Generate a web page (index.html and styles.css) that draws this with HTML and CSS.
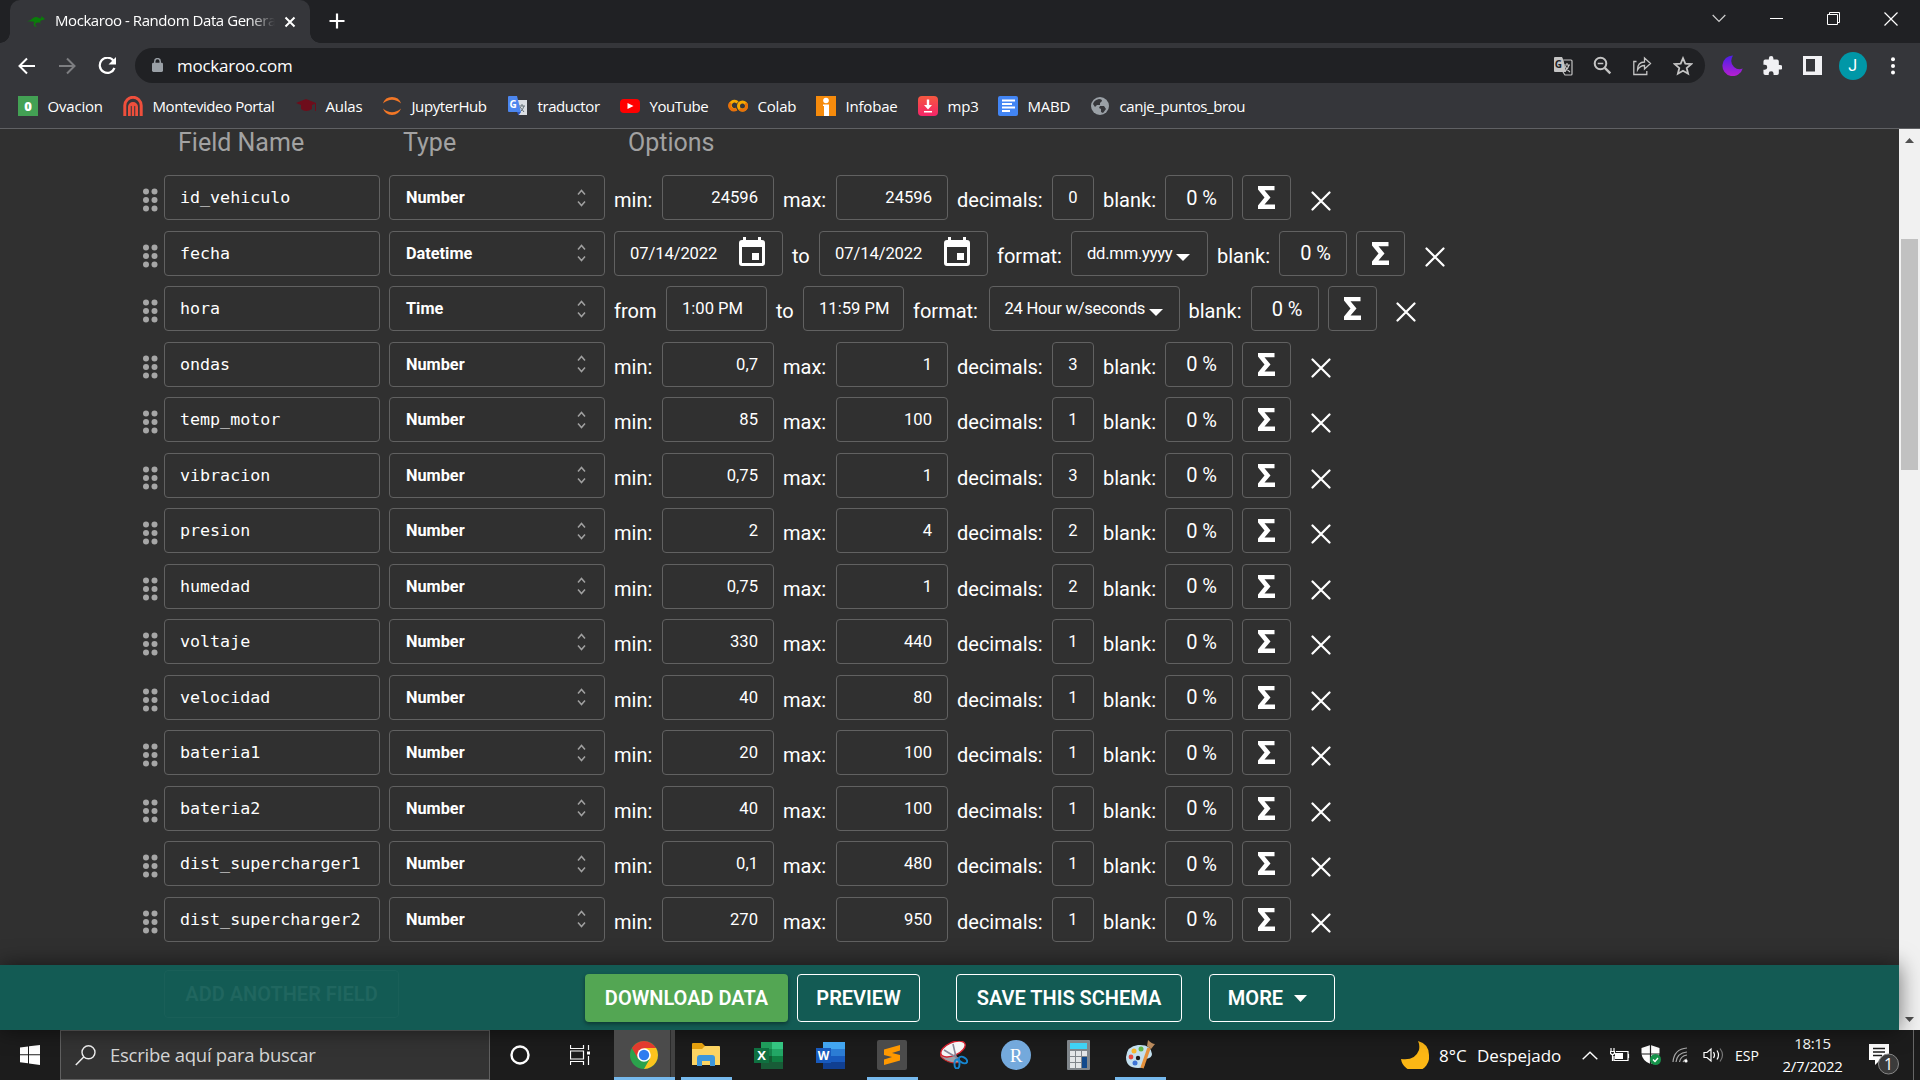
FILE: index.html
```html
<!DOCTYPE html>
<html lang="es">
<head>
<meta charset="utf-8">
<title>Mockaroo - Random Data Generator</title>
<link rel="stylesheet" href="styles.css">
</head>
<body>
<div class="tabstrip">
  <div class="tab">
    <svg class="roo" width="18" height="12" viewBox="0 0 18 12"><path fill="#0a7d0a" d="M0 6.500Q4 5.500 6 3q3-2 6 0l2 .5L14.500 1l1.500 1.500 2 1.500-2 1-2 .5-1 1.500 1 2-1.500-1.500L11 7.500 9 8l-1 2 2 1.500H7.500L6.500 9l1-2Q4 6 0 6.500Z"/></svg>
    <span class="tab-title">Mockaroo - Random Data Genera</span>
    <svg width="12" height="12" viewBox="0 0 12 12"><path d="m1.500 1.500 9 9m0-9-9 9" stroke="#fff" stroke-width="2"/></svg>
  </div>
  <svg class="plus" width="16" height="16" viewBox="0 0 16 16"><path d="M8 .5v15M.5 8h15" stroke="#fff" stroke-width="2.200"/></svg>
  <div class="winbtns">
    <span><svg width="14" height="9" viewBox="0 0 14 9"><path d="m.7 1 6.300 6.500L13.300 1" fill="none" stroke="#d0d0d0" stroke-width="1.200"/></svg></span>
    <span><svg width="13" height="13"><path d="M0 6.500h13" stroke="#fff"/></svg></span>
    <span><svg width="13" height="13"><path d="M.5 2.500h10v10H.5zM2.500 2.500v-2h10v10h-2" fill="none" stroke="#fff"/></svg></span>
    <span><svg width="14" height="14"><path d="m.5.500 13 13m0-13-13 13" stroke="#fff" stroke-width="1.200"/></svg></span>
  </div>
</div>

<div class="toolbar">
  <div class="nav">
    <svg width="18" height="18" viewBox="0 0 18 18"><path d="M17 9H2m7-7.500L1.500 9 9 16.500" fill="none" stroke="#fff" stroke-width="2"/></svg>
    <svg width="18" height="18" viewBox="0 0 18 18"><path d="M1 9h15M9 1.500 16.500 9 9 16.500" fill="none" stroke="#7d7e81" stroke-width="2"/></svg>
    <svg width="19" height="18" viewBox="0 0 19 18"><path d="M15.300 3.500A7.600 7.600 0 1 0 16.500 11" fill="none" stroke="#fff" stroke-width="2.200"/><path d="M18 0v7.500h-7.500z" fill="#fff"/></svg>
  </div>
  <div class="omnibox">
    <svg width="11" height="15" viewBox="0 0 12 16"><rect y="5" width="12" height="10" rx="1.500" fill="#9aa0a6"/><path d="M3 6V3.500a3 3 0 0 1 6 0V6" fill="none" stroke="#9aa0a6" stroke-width="1.600"/></svg>
    <span class="url">mockaroo.com</span>
    <div class="omni-icons">
      <svg width="20" height="20" viewBox="0 0 20 20"><path fill="#c4c4c4" d="M2 1h7l1.500 3L13 16H2a1 1 0 0 1-1-1V2a1 1 0 0 1 1-1z"/><text x="1.700" y="12" font-size="10" font-weight="700" class="ui" fill="#202124">G</text><path d="M10.500 4H18q1 0 1 1v13q0 1-1 1h-6l-2-3M11 9h6m-3-2v2m2 0q-1 4-4 6m0-5q2 4 5 6" fill="none" stroke="#c4c4c4" stroke-width="1.200"/></svg>
      <svg width="19" height="19" viewBox="0 0 19 19"><circle cx="7.500" cy="7.500" r="5.800" fill="none" stroke="#c4c4c4" stroke-width="2"/><path d="M4.700 7.500h5.600" stroke="#c4c4c4" stroke-width="1.500"/><path d="m11.800 11.800 5.500 5.500" stroke="#c4c4c4" stroke-width="2.400"/></svg>
      <svg width="20" height="20" viewBox="0 0 20 20"><path d="M4.500 5.500H1.800v13h13v-3.500M5.500 14c0-6 3-8 7-8V2l6 5.500-6 5.500v-3.500c-3 0-5 1-7 4.500z" fill="none" stroke="#c4c4c4" stroke-width="1.300"/></svg>
      <svg width="20" height="20" viewBox="0 0 20 20"><path d="m10 2.200 2.300 5.400 5.900.5-4.500 3.900 1.400 5.700-5.100-3-5.100 3L6.300 12 1.800 8.100l5.900-.5z" fill="none" stroke="#c4c4c4" stroke-width="1.800"/></svg>
    </div>
  </div>
  <div class="exts">
    <span><svg width="21" height="21" viewBox="0 0 21 21"><defs><linearGradient id="mg" x2="0" y2="1"><stop stop-color="#4a1fe8"/><stop offset="1" stop-color="#b71fd0"/></linearGradient></defs><path fill="url(#mg)" d="M11 .5a10.300 10.300 0 1 0 9.700 13Q16 15.500 12 12 7 7 11 .5z"/></svg></span>
    <span><svg width="19" height="19" viewBox="1.500 1 21 21"><path fill="#f1f1f4" d="M20.500 11H19V7a2 2 0 0 0-2-2h-4V3.500a2.500 2.500 0 0 0-5 0V5H4a2 2 0 0 0-2 2v3.800h1.500a2.700 2.700 0 0 1 0 5.400H2V20a2 2 0 0 0 2 2h3.800v-1.500a2.700 2.700 0 0 1 5.400 0V22H17a2 2 0 0 0 2-2v-4h1.500a2.500 2.500 0 0 0 0-5z"/></svg></span>
    <span><svg width="19" height="19" viewBox="0 0 19 19"><path fill="#f1f1f4" fill-rule="evenodd" d="M0 0h19v19H0zM3 3v12.500h9V3z"/></svg></span>
    <span><b class="avatar">J</b></span>
    <span><svg width="4" height="18" viewBox="0 0 4 18"><g fill="#fff"><circle cx="2" cy="2.200" r="2"/><circle cx="2" cy="9" r="2"/><circle cx="2" cy="15.500" r="2"/></g></svg></span>
  </div>
</div>

<div class="bookmarks">
  <div><svg viewBox="0 0 20 20"><path fill="#43a154" d="M0 0h20v20H0z"/><text x="10" y="14.500" text-anchor="middle" font-size="13" font-weight="800" class="ui" fill="#fff">0</text></svg>Ovacion</div>
  <div class="tight"><svg viewBox="0 0 20 20"><path d="M1.800 20V9.500a8.200 8.200 0 0 1 16.400 0V20M6.500 20v-9a3.500 3.500 0 0 1 7 0v9M10 8v12" fill="none" stroke="#ef4f3c" stroke-width="3"/><path d="M8.200 10v10M11.800 10v10" stroke="#35363a" stroke-width=".8"/></svg>Montevideo Portal</div>
  <div><svg viewBox="0 0 20 20"><path fill="#6e0d1b" d="m0 7 10-4 10 4v8h-1V8l-3 1v4q-6 4-11 0V9z"/></svg>Aulas</div>
  <div class="tight"><svg viewBox="0 0 20 20"><path fill="#f37726" d="M1 7.500a9.500 9.500 0 0 1 18 0q-9-7.500-18 0zM1 12.500a9.500 9.500 0 0 0 18 0q-9 7.500-18 0z"/></svg>JupyterHub</div>
  <div class="tight"><svg viewBox="0 0 20 20"><path fill="#dcdfe3" d="M7 4h12v15h-8z"/><path d="M11 10h6m-3-2v2m2 0q-1 4-4 6m0-5 4 5" fill="none" stroke="#657177"/><path fill="#4c86ee" d="M1 0h8l4 16H1q-1 0-1-1V1q0-1 1-1z"/><path fill="#3059c4" d="m9 16h4l-2.500 3.500z"/><text x="1.500" y="12" font-size="10" font-weight="700" class="ui" fill="#fff">G</text></svg>traductor</div>
  <div class="tight"><svg viewBox="0 0 20 20"><rect y="3" width="20" height="14" rx="4" fill="#f00"/><path fill="#fff" d="m7.500 7 6 3-6 3z"/></svg>YouTube</div>
  <div><svg viewBox="0 0 20 20"><g fill="none" stroke-width="3"><circle cx="14.500" cy="10" r="4" stroke="#f9ab00"/><path d="M9.500 6.500A4.200 4.200 0 1 0 8.500 13" stroke="#f9ab00"/><path d="M2.700 7A4.200 4.200 0 0 0 8.500 13M11.700 13A4 4 0 0 0 17.400 7.200" stroke="#e8710a"/></g></svg>Colab</div>
  <div><svg viewBox="0 0 20 20"><path fill="#f68b0c" d="M0 0h20v20H0z"/><circle cx="10" cy="4.500" r="2.800" fill="#fff"/><path fill="#fff" d="M7 8.500h6V20H8V10H7z"/></svg>Infobae</div>
  <div><svg viewBox="0 0 20 20"><defs><linearGradient id="rg" x2="0" y2="1"><stop stop-color="#f4583f"/><stop offset="1" stop-color="#f52469"/></linearGradient></defs><rect width="20" height="20" rx="4" fill="url(#rg)"/><path fill="#fff" d="M8.800 3.500h2.400V9H14l-4 4.500L6 9h2.800zM6 15h8v1.500H6z"/></svg>mp3</div>
  <div><svg viewBox="0 0 20 20"><rect width="20" height="20" rx="2" fill="#4285f4"/><path d="M4 4.500h13M4 8h10M4 11.500h13M4 15h8" stroke="#fff" stroke-width="1.900"/></svg>MABD</div>
  <div class="tight"><svg viewBox="0 0 20 20"><circle cx="10" cy="10" r="9" fill="#9aa0a6"/><path fill="#35363a" d="M9 3q3 0 3 2l-2 2 0 2H7L5 11 3 8q1-4 6-5zM10 10l4 0 2 3-3 4-2-1 0-3-2-1z"/></svg>canje_puntos_brou</div>
</div>

<div class="viewport">
  <main class="page">
    <div class="heads"><span>Field Name</span><span>Type</span><span>Options</span></div>
    <div id="rows"></div>
  </main>
  <div class="scrollbar">
    <svg width="9" height="5"><path fill="#505050" d="M4.500 0 9 5H0z"/></svg>
    <div class="thumb"></div>
    <svg width="9" height="5"><path fill="#505050" d="M0 0h9L4.500 5z"/></svg>
  </div>
  <div class="actions">
    <span class="ghost">ADD ANOTHER FIELD</span>
    <span class="btn primary">DOWNLOAD DATA</span>
    <span class="btn preview">PREVIEW</span>
    <span class="btn save">SAVE THIS SCHEMA</span>
    <span class="btn more">MORE<svg width="13" height="7"><path fill="#fff" d="M0 0h13L6.500 7z"/></svg></span>
  </div>
</div>

<div class="taskbar">
  <span class="start"><svg width="20" height="20" viewBox="0 0 20 20"><path fill="#fff" d="M0 2.500 8 1.400v7.900H0zM9 1.300 20 0v9.300H9zM0 10.300h8v7.900l-8-1zM9 10.300h11V20L9 18.500z"/></svg></span>
  <div class="search"><svg width="21" height="21" viewBox="0 0 21 21"><circle cx="13.500" cy="7.300" r="6.500" fill="none" stroke="#eee" stroke-width="1.400"/><path d="M8.700 12 .8 20" stroke="#eee" stroke-width="1.500"/></svg><span>Escribe aquí para buscar</span></div>
  <span class="small"><svg width="20" height="20"><circle cx="10" cy="10" r="8.500" fill="none" stroke="#fff" stroke-width="2.400"/></svg></span>
  <span class="small view"><svg width="21" height="20" viewBox="0 0 21 20"><path d="M.5 0v3.500h13V0M.5 20v-3.500h13V20M.5 6h13v8H.5zM18.500 0v5M18.500 11v9" fill="none" stroke="#fff" stroke-width="1.200"/><path fill="#fff" d="M17 6.500h3v3h-3z"/></svg></span>
  <span class="app active"><svg width="28" height="28" viewBox="0 0 28 28"><circle cx="14" cy="14" r="14" fill="#2ba24c"/><path fill="#e33b2e" d="M1.900 7A14 14 0 0 1 26.100 7L14 8 8 17.500z"/><path fill="#fcc31e" d="M26.100 7A14 14 0 0 1 14 28l6-10.500L14 7z"/><circle cx="14" cy="14" r="6.800" fill="#fff"/><circle cx="14" cy="14" r="5.200" fill="#2f7cf0"/></svg></span>
  <span class="app open"><svg width="28" height="25" viewBox="0 0 28 25"><path fill="#e39f0d" d="M0 1q0-1 1-1h9l3 3v5H0z"/><path fill="#fcd462" d="M0 6h10l3-3h14q1 0 1 1v18H0z"/><path fill="#3d97dc" d="M5 23v-8q0-3 3-3h12q3 0 3 3v8h-5v-5h-8v5z"/></svg></span>
  <span class="app"><svg width="29" height="27" viewBox="0 0 29 27"><path fill="#1f9c5b" d="M7 0h11v7H7z"/><path fill="#34c481" d="M18 0h11v7H18z"/><path fill="#15834b" d="M7 7h11v7H7z"/><path fill="#22a665" d="M18 7h11v7H18z"/><path fill="#135b32" d="M7 14h11v13H7z"/><path fill="#0f7e42" d="M18 14h11v6H18z"/><path fill="#185c37" d="M7 20h22v7H7z"/><path fill="#0f7040" d="M0 6h15v15H0z"/><text x="7.500" y="18" text-anchor="middle" font-size="13" font-weight="700" class="ui" fill="#fff">X</text></svg></span>
  <span class="app"><svg width="29" height="27" viewBox="0 0 29 27"><path fill="#42a5f0" d="M7 0h22v7H7z"/><path fill="#2b7cd4" d="M7 7h22v7H7z"/><path fill="#185abd" d="M7 14h22v6H7z"/><path fill="#103f91" d="M7 20h22v7H7z"/><path fill="#185abd" d="M0 6h15v15H0z"/><text x="7.500" y="18" text-anchor="middle" font-size="12" font-weight="700" class="ui" fill="#fff">W</text></svg></span>
  <span class="app open"><svg width="30" height="30" viewBox="0 0 30 30"><rect width="30" height="30" rx="2" fill="#4b4b4b"/><path fill="#ff9800" d="m7 9.500 16-4.500v5.500L15 13l8 2v5.500L7 25v-5.500l8-2.500-8-2z"/></svg></span>
  <span class="app"><svg width="28" height="28" viewBox="0 0 28 28"><ellipse cx="10" cy="17" rx="10" ry="4" fill="#9fa2a8" stroke="#c22" transform="rotate(20 10 17)"/><ellipse cx="13" cy="8" rx="13" ry="6.500" fill="#f5f5f5" stroke="#d3202e" stroke-width="1.400" transform="rotate(-24 13 8)"/><path d="m13 3 3 13M4 9l15 9" stroke="#889" stroke-width="1.600"/><ellipse cx="17" cy="23" rx="2.500" ry="4.500" fill="none" stroke="#1685cf" stroke-width="2"/><ellipse cx="23" cy="19" rx="4.500" ry="2.800" fill="none" stroke="#1685cf" stroke-width="2" transform="rotate(30 23 19)"/></svg></span>
  <span class="app"><svg width="30" height="30" viewBox="0 0 30 30"><circle cx="15" cy="15" r="15" fill="#74a9dc"/><text x="15" y="21.500" text-anchor="middle" font-size="19" class="serif" fill="#fff">R</text></svg></span>
  <span class="app"><svg width="23" height="30" viewBox="0 0 23 30"><rect width="23" height="30" rx="1" fill="#80868b"/><path fill="#3fd2f5" d="M3 3h17v6H3z"/><path fill="#e3e6e8" d="M3 11h5v5H3zM9 11h5v5H9zM15 11h5v5h-5zM3 17h5v5H3zM9 17h5v5H9zM3 23h5v5H3zM9 23h5v5H9z"/><path fill="#124a8c" d="M15 17h5v11h-5z"/></svg></span>
  <span class="app open"><svg width="30" height="30" viewBox="0 0 30 30"><path fill="#c3e0ef" d="M13 5q13-1 14 9 0 4-6 5-3 1-1 4 0 5-7 5Q1 28 1 17 2 6 13 5z"/><circle cx="9" cy="11" r="2.500" fill="#f8b62b"/><circle cx="16" cy="9" r="2.500" fill="#62b544"/><circle cx="6" cy="17" r="2.400" fill="#e84a3f"/><circle cx="10" cy="23" r="2.500" fill="#3d74d6"/><circle cx="13" cy="18" r="2.200" fill="#1c1c1c"/><path d="m24 8-7 20" stroke="#e4913c" stroke-width="3.400"/><path fill="#b98a5c" d="M22 6 23 0q4 4 7 4l-4 5z"/></svg></span>
  <div class="tray">
    <span class="t-moon"><svg width="28" height="28" viewBox="0 0 28 28"><path fill="#fcb715" d="M17 0q11 3 11 14a14 14 0 0 1-28 4q14 2 18-9 1-5-1-9z"/></svg></span>
    <span class="t-temp">8°C</span><span class="t-desp">Despejado</span>
    <span class="t-chev"><svg width="16" height="9"><path d="m.7 8.300 7.300-7 7.300 7" fill="none" stroke="#fff" stroke-width="1.400"/></svg></span>
    <span class="t-ic"><svg width="20" height="15" viewBox="0 0 20 15"><path d="M6 3.500h12v9H4V8M18.500 6v4M1 0v3M4 0v3M.5 3.500h4v2q-2 2-4 0zM2.500 6v7" fill="none" stroke="#fff" stroke-width="1.200"/><path fill="#fff" d="M5 5h8v6H5z"/></svg></span>
    <span class="t-ic"><svg width="20" height="20" viewBox="0 0 20 20"><path fill="#fff" d="m9.500 0 9 3v6q-1 7-9 10-8-3-9-10V3z"/><path d="M9.500 0v19M0 9h19" stroke="#1c1c1c" stroke-width="1.200"/><circle cx="14.500" cy="14.500" r="5.500" fill="#16924a"/><path d="m12 14.500 2 2 3-3.500" fill="none" stroke="#fff" stroke-width="1.300"/></svg></span>
    <span class="t-ic"><svg width="16" height="16" viewBox="0 0 16 16"><g fill="none" stroke="#aaa" stroke-width="1.200"><path d="M1 15Q2 2 15 1M4 15q1-9 11-10M7.500 15q1-6 7.500-7"/><path d="M11 15q1-2 4-3"/></g><circle cx="14" cy="14" r="1.600" fill="#fff"/></svg></span>
    <span class="t-vol"><svg width="21" height="16" viewBox="0 0 21 16"><path d="M1 5.500h3L8 2v12l-4-3.500H1zM10.500 5q2 3 0 6M14 3.500q3 4.500 0 9" fill="none" stroke="#fff" stroke-width="1.200"/><path d="M17 1.500q5 6.500 0 13" fill="none" stroke="#777" stroke-width="1.200"/></svg></span>
    <span class="t-esp">ESP</span>
    <span class="t-clock"><span>18:15</span><span>2/7/2022</span></span>
    <span class="t-note"><svg width="32" height="32" viewBox="0 0 32 32"><path fill="#fff" d="M1 1h20v16h-9l-5 5v-5H1z"/><path d="M5 5.500h12M5 9h12M5 12.500h9" stroke="#1c1c1c" stroke-width="1.300"/><circle cx="20.500" cy="21" r="10" fill="#3b3b3b" stroke="#888"/><text x="20.500" y="26.500" text-anchor="middle" font-size="16" class="ui" fill="#fff">1</text></svg></span>
  </div>
</div>
<script src="rows.js"></script>
</body>
</html>
```
FILE: rows.js
```js
const handle = '<svg class="handle" width="16" height="24"><g fill="#a6a6a6"><circle cx="3" cy="3.500" r="3"/><circle cx="11.500" cy="3.500" r="3"/><circle cx="3" cy="12" r="3"/><circle cx="11.500" cy="12" r="3"/><circle cx="3" cy="20.500" r="3"/><circle cx="11.500" cy="20.500" r="3"/></g></svg>';
const updown = '<svg width="9" height="18"><path d="m1 5.500 3.500-4 3.500 4M1 12.500l3.500 4 3.500-4" fill="none" stroke="#a0a0a0" stroke-width="1.500"/></svg>';
const calendar = '<svg class="cal" width="26" height="29" viewBox="0 0 26 29"><path fill="#fff" fill-rule="evenodd" d="M4 0h3v3h12V0h3v3h1q3 0 3 3v20q0 3-3 3H3q-3 0-3-3V6q0-3 3-3h1zM3 10v16h20V10z"/><path fill="#fff" d="M13 16h7v7h-7z"/></svg>';
const caret = '<svg class="caret" width="14" height="7"><path fill="#fff" d="M0 0h14L7 7z"/></svg>';
const sigma = '<span class="box sigma"><svg width="17" height="23" viewBox="0 0 17 23"><path fill="#fff" d="M0 0h16.500v4.200H6.500l6 7.200-6 7.200h10.500V23H0v-3.500l6.500-8L0 3.500z"/></svg></span>';
const close = '<svg class="close" width="20" height="20"><path d="m1.500 1.500 17 17m0-17-17 17" stroke="#fff" stroke-width="2.200" stroke-linecap="round"/></svg>';

const label = (text, cls) => `<span class="label ${cls}">${text}</span>`;
const box = (text, cls) => `<span class="box ${cls}">${text}</span>`;
const blank = label('blank:', 'l-blank') + box('0 %', 'pct') + sigma + close;

function numberOptions(min, max, decimals) {
  return label('min:', 'l-min') + box(min, 'num') + label('max:', 'l-max') + box(max, 'num') +
    label('decimals:', 'l-dec') + box(decimals, 'dec') + blank;
}
const dates = box('<span>07/14/2022</span>' + calendar, 'date') + label('to', 'l-to') +
  box('<span>07/14/2022</span>' + calendar, 'date') + label('format:', 'l-fmt') + box('<span>dd.mm.yyyy</span>' + caret, 'datefmt') + blank;
const times = label('from', 'l-from') + box('1:00 PM', 'time') + label('to', 'l-to') +
  box('11:59 PM', 'time') + label('format:', 'l-fmt wide') + box('<span>24 Hour w/seconds</span>' + caret, 'timefmt') + blank;

const fields = [
  ['id_vehiculo', 'Number', numberOptions('24596', '24596', 0)],
  ['fecha', 'Datetime', dates],
  ['hora', 'Time', times],
  ['ondas', 'Number', numberOptions('0,7', '1', 3)],
  ['temp_motor', 'Number', numberOptions('85', '100', 1)],
  ['vibracion', 'Number', numberOptions('0,75', '1', 3)],
  ['presion', 'Number', numberOptions('2', '4', 2)],
  ['humedad', 'Number', numberOptions('0,75', '1', 2)],
  ['voltaje', 'Number', numberOptions('330', '440', 1)],
  ['velocidad', 'Number', numberOptions('40', '80', 1)],
  ['bateria1', 'Number', numberOptions('20', '100', 1)],
  ['bateria2', 'Number', numberOptions('40', '100', 1)],
  ['dist_supercharger1', 'Number', numberOptions('0,1', '480', 1)],
  ['dist_supercharger2', 'Number', numberOptions('270', '950', 1)],
];
document.getElementById('rows').innerHTML = fields.map(([name, type, options]) =>
  `<div class="row">${handle}${box(name, 'name')}${box(type + updown, 'type')}${options}</div>`).join('');
```
FILE: styles.css
```css
* { box-sizing: border-box; }
body { margin: 0; width: 1920px; height: 1080px; overflow: hidden; display: flex; flex-direction: column; background: #303030; color: #fff; font-family: "Open Sans", "Noto Sans", sans-serif; }
svg { display: block; flex: none; }
.ui { font-family: "Open Sans", sans-serif; }
.serif { font-family: "Liberation Serif", serif; }

.tabstrip { flex: none; height: 43px; background: #202124; display: flex; padding-left: 10px; }
.tab { position: relative; width: 300px; height: 43px; background: #35363a; border-radius: 10px 10px 0 0; display: flex; align-items: center; padding-left: 17px; }
.tab::before, .tab::after { content: ""; position: absolute; bottom: 0; width: 10px; height: 10px; }
.tab::before { left: -10px; background: radial-gradient(circle at 0 0, transparent 9.500px, #35363a 10px); }
.tab::after { right: -10px; background: radial-gradient(circle at 100% 0, transparent 9.500px, #35363a 10px); }
.tab-title { width: 220px; margin: 0 9px 0 10px; padding-bottom: 3px; white-space: nowrap; font-size: 15px; letter-spacing: -.44px; mask-image: linear-gradient(90deg, #000 88%, transparent); }
.roo { margin-top: -2px; }
.plus { margin: 13px 0 0 19px; }
.winbtns { margin-left: auto; display: flex; height: 37px; }
.winbtns span { width: 57.500px; display: flex; align-items: center; justify-content: center; }

.toolbar { flex: none; height: 45px; background: #35363a; display: flex; align-items: center; }
.nav { width: 135px; display: flex; gap: 22px; padding-left: 18px; }
.omnibox { width: 1570px; height: 35px; background: #202124; border-radius: 18px; display: flex; align-items: center; padding: 0 17px 0 17px; }
.url { margin-left: 14px; font-size: 17px; letter-spacing: -.25px; }
.omni-icons { margin-left: auto; display: flex; align-items: center; gap: 20.300px; margin-right: -4.500px; }
.exts { display: flex; height: 45px; margin-left: 7px; }
.exts span { width: 40.200px; display: flex; align-items: center; justify-content: center; }
.avatar { width: 28px; height: 28px; border-radius: 50%; background: #0097a7; font-family: Roboto, sans-serif; font-weight: 400; font-size: 16px; line-height: 28px; text-align: center; }

.bookmarks { flex: none; height: 41px; background: #35363a; border-bottom: 1px solid #606164; display: grid; grid-template-columns: 105px 173px 86px 126px 112px 108px 88px 102px 80px 92px 200px; padding: 0 0 5px 18px; font-size: 15px; letter-spacing: -.2px; }
.bookmarks div { display: flex; align-items: center; gap: 9.500px; white-space: nowrap; }
.bookmarks .tight { letter-spacing: -.42px; }
.bookmarks svg { width: 20px; height: 20px; }

.viewport { position: relative; flex: none; height: 901px; display: flex; font-family: Roboto, sans-serif; }
.page { width: 1899px; padding-left: 143px; overflow: hidden; }
.heads { height: 46px; display: grid; grid-template-columns: 225px 225px 200px; padding-left: 35px; font-size: 25px; line-height: 27px; color: #a2a2a2; }
.row { height: 55.540px; display: flex; gap: 9px; align-items: flex-start; white-space: nowrap; }
.handle { margin: 13px -4px 0 0; }
.box { height: 45px; border: 1px solid #616161; border-radius: 4px; display: flex; align-items: center; font-size: 16.600px; flex: none; }
.name { width: 216px; padding-left: 15px; font-family: "DejaVu Sans Mono", monospace; font-size: 16.660px; }
.type { width: 216px; padding: 0 18px 0 16px; justify-content: space-between; font-weight: 700; font-size: 16.300px; }
.num { width: 112px; justify-content: flex-end; padding-right: 15px; }
.dec { width: 42px; justify-content: center; }
.pct { width: 68px; justify-content: flex-end; padding-right: 15px; font-size: 20px; }
.sigma { width: 49px; justify-content: center; }
.date { width: 169px; justify-content: space-between; padding: 0 16px 0 15px; }
.date span { width: 84px; letter-spacing: -.1px; }
.cal { margin: -3px 1px 0 0; }
.datefmt { width: 137px; padding-left: 15px; letter-spacing: -.25px; }
.time { width: 101px; padding-left: 15px; }
.timefmt { width: 191px; padding-left: 15px; letter-spacing: -.25px; }
.caret { margin: 8px 0 0 4px; }
.label { font-size: 20px; line-height: 24px; margin-top: 13px; flex: none; }
.l-min { width: 39px; }
.l-max { width: 44px; }
.l-dec { width: 86px; }
.l-blank { width: 53px; }
.l-to { width: 18px; }
.l-fmt { width: 65px; }
.l-fmt.wide { width: 66.500px; }
.l-from { width: 43px; }
.close { margin: 16px 0 0 10.500px; }

.scrollbar { width: 21px; background: #f1f1f1; display: flex; flex-direction: column; align-items: center; padding: 9px 0 8px; }
.thumb { width: 17px; height: 231px; background: #c1c1c1; margin: 96px 0 auto; }

.actions { position: absolute; left: 0; bottom: 0; width: 1899px; height: 65px; background: #135b54; box-shadow: 0 0 22px rgba(0,0,0,.55); display: flex; padding-top: 9px; font-size: 20px; font-weight: 600; }
.ghost { width: 235px; height: 48px; margin: -4px 186px 0 164px; border: 1px solid #195f58; border-radius: 4px; color: #20665f; line-height: 47px; text-align: center; }
.btn { height: 48px; border: 1px solid #fff; border-radius: 4px; display: flex; align-items: center; justify-content: center; }
.primary { width: 203px; background: #53a653; border: 0; box-shadow: 0 2px 4px rgba(0,0,0,.4); }
.preview { width: 123px; margin-left: 9px; }
.save { width: 226px; margin-left: 36px; }
.more { width: 126px; margin-left: 27px; gap: 11px; padding-right: 9px; }

.taskbar { flex: none; height: 50px; background: #1c1c1c; display: flex; }
.start { width: 60px; display: flex; align-items: center; justify-content: center; }
.search { width: 430px; background: #333; border: 1px solid #606060; display: flex; align-items: center; gap: 14px; padding-left: 14px; color: #d5d5d5; font-size: 18.500px; letter-spacing: -.25px; }
.search span { padding-bottom: 2px; }
.small { width: 60px; display: flex; align-items: center; justify-content: center; }
.view { margin-right: 4px; }
.app { position: relative; width: 62px; display: flex; align-items: center; justify-content: center; padding-right: 2px; }
.active { background: linear-gradient(90deg, #4b4b4b 56px, #2b2b2b 56px, #2b2b2b 57px, #424242 57px, #424242 61px, transparent 61px); }
.active::after, .open::after { content: ""; position: absolute; bottom: 0; left: 5px; width: 51px; height: 3px; background: #76b9ed; }
.active::after { left: 0; width: 61px; }
.tray { margin-left: auto; width: 519px; display: flex; align-items: center; font-size: 17px; }
.tray > span { flex: none; white-space: nowrap; }
.t-moon { width: 38px; }
.t-temp { width: 38px; }
.t-desp { width: 105px; }
.t-chev { width: 28px; }
.t-ic { width: 31px; }
.t-vol { width: 32px; }
.t-esp { width: 47px; font-size: 14px; }
.t-clock { width: 61px; display: flex; flex-direction: column; align-items: center; font-size: 15px; line-height: 23px; letter-spacing: -.3px; }
.t-note { margin-left: 25px; width: 45px; padding-top: 7px; }
.tray::after { content: ""; height: 50px; border-left: 1px solid #666; }
```
